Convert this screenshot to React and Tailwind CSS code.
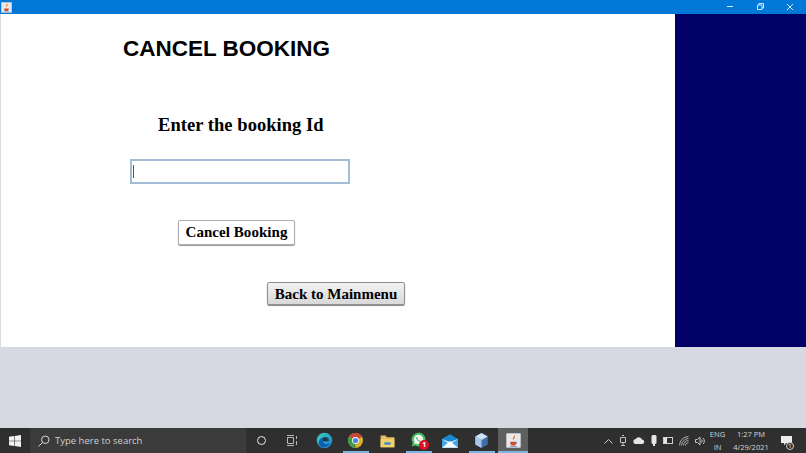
import React from "react";

const Under = ({ on, active, children }) => (
  <div className={active ? "relative flex h-full w-[30px] items-center justify-center bg-[#5f5f5f] mx-[0.75px]" : "relative flex h-full w-[30px] items-center justify-center mx-[0.75px]"}>
    {children}
    {on ? <div className={active ? "absolute bottom-0 left-0 right-0 h-[2px] bg-[#7cb6e0]" : "absolute bottom-0 left-[2px] right-[2px] h-[2px] bg-[#7cb6e0]"} /> : null}
  </div>
);

function Edge() {
  return (
    <svg width="17" height="17" viewBox="0 0 24 24">
      <defs>
        <linearGradient id="e1" x1="0" y1="0" x2="1" y2="1"><stop offset="0" stopColor="#3bd0c0" /><stop offset="1" stopColor="#1c7fd0" /></linearGradient>
      </defs>
      <circle cx="12" cy="12" r="11" fill="url(#e1)" />
      <path d="M4 16c0-6 5-9 9-8 3 .7 4 3 3 5h-6c0 4 5 5 10 3-2 5-8 7-12 5-3-1-4-3-4-5z" fill="#0b5fb0" />
      <path d="M10 13h8c1-3-1-6-5-6-2 0-3 1-4 2 1 0 1 3 1 4z" fill="#2a2a2a" opacity="0.75" />
    </svg>
  );
}
function Chrome() {
  return (
    <svg width="15" height="15" viewBox="0 0 24 24">
      <circle cx="12" cy="12" r="12" fill="#d8b030" />
      <path d="M12 12 1.6 6A12 12 0 0 1 22.4 6z" fill="#c9443a" />
      <path d="M12 12 1.6 6A12 12 0 0 0 12 24z" fill="#3f9a4c" />
      <circle cx="12" cy="12" r="5.5" fill="#fff" />
      <circle cx="12" cy="12" r="4.2" fill="#4a86dc" />
    </svg>
  );
}
function Folder() {
  return (
    <svg width="15" height="14" viewBox="0 0 24 22">
      <path d="M1 2h8l2 3h12v16H1z" fill="#e8c05c" />
      <path d="M1 8h22v13H1z" fill="#f2d06e" />
      <path d="M7 13h10v4H7z" fill="#3e8ac0" />
    </svg>
  );
}
function WhatsApp() {
  return (
    <div className="relative ml-[3px] h-[18px] w-[18px]">
      <svg width="15" height="15" viewBox="0 0 24 24" className="absolute left-0 top-0">
        <path d="M12 1a11 11 0 0 0-9.4 16.6L1 23l5.6-1.5A11 11 0 1 0 12 1z" fill="#43c05a" />
        <path d="M12 4.5a7.5 7.5 0 0 0-6.3 11.5l-.8 3 3.1-.8A7.5 7.5 0 1 0 12 4.500z" fill="#f3f3f3" />
        <path d="M9 8c-1 1-1 2.500.5 4.500S13 16 14.500 15.500l1-1.200-2-1.300-.8.7c-1-.5-1.800-1.400-2.200-2.400l.7-.7-1-2.200z" fill="#43c05a" />
      </svg>
      <div className="absolute bottom-0 right-0 flex h-[10px] w-[10px] items-center justify-center rounded-full bg-[#e01020] text-[7px] font-bold leading-none text-white">1</div>
    </div>
  );
}
function Mail() {
  return (
    <svg width="16" height="14" viewBox="0 0 24 20">
      <path d="M0 7 12 0l12 7v13H0z" fill="#1a8ad0" />
      <path d="M0 7l12 7 12-7v13H0z" fill="#3ea8e6" />
      <path d="M0 20 12 10l12 10z" fill="#ffffff" opacity="0.95" />
      <path d="M0 7l12 8 12-8-12 5z" fill="#fff" />
    </svg>
  );
}
function Box() {
  return (
    <svg width="13" height="15" viewBox="0 0 20 24">
      <path d="M10 0 20 5.500v13L10 24 0 18.500v-13z" fill="#3d6fb0" />
      <path d="M10 0 20 5.500 10 11 0 5.500z" fill="#cfe2f4" />
      <path d="M10 11v13L0 18.500v-13z" fill="#a9c8e8" />
    </svg>
  );
}
function Java({ size = 15 }) {
  return (
    <svg width={size} height={size} viewBox="0 0 24 24">
      <rect x="0.500" y="0.500" width="23" height="23" rx="2" fill="#e8e8e8" stroke="#bcbcbc" />
      <path d="M13 3c1 3-3 4-2 7 .3 1 1 1.500 1 1.500-1-2 3-3.500 2.500-6C14.300 4.500 14 3.500 13 3z" fill="#e07020" />
      <path d="M7 14h9v3c0 2-2 3-4.500 3S7 19 7 17z" fill="#d04a30" />
      <path d="M6 21h12v1H6z" fill="#4a70a8" />
      <path d="M16 14.500c2 0 2 2.500-.5 3" fill="none" stroke="#4a70a8" />
    </svg>
  );
}

export default function App() {
  return (
    <div className="flex h-[453px] w-[806px] flex-col overflow-hidden bg-[#d6d9e2]" style={{ fontFamily: '"Liberation Serif", serif' }}>
      <div className="flex h-[14px] shrink-0 items-center justify-between bg-[#0078d7]">
        <div className="ml-[1px] mt-[1px]"><Java size={11} /></div>
        <div className="flex items-center text-[#d5e6f6]">
          <svg width="30" height="14" viewBox="0 0 30 14"><path d="M12 6.500h6" stroke="currentColor" strokeWidth="1" /></svg>
          <svg width="30" height="14" viewBox="0 0 30 14"><path d="M12.500 5h4.500v4.500h-4.500zM14 5V3.500h4.500V8H17" fill="none" stroke="currentColor" strokeWidth="1" /></svg>
          <svg width="30" height="14" viewBox="0 0 30 14" className="mr-[1px]"><path d="M12 4l6 6M18 4l-6 6" stroke="currentColor" strokeWidth="1" /></svg>
        </div>
      </div>

      <div className="flex h-[333px] shrink-0">
        <div className="flex w-[675px] flex-col items-start border-l border-[#dcdcdc] bg-white">
          <h1 className="ml-[122px] mt-[20px] text-[22.5px] font-bold leading-[30px] text-black" style={{ fontFamily: '"Liberation Sans", sans-serif' }}>CANCEL BOOKING</h1>
          <p className="ml-[157px] mt-[49px] text-[18.5px] font-bold leading-[24px] tracking-[0.05px] text-black">Enter the booking Id</p>
          <div className="ml-[129px] mt-[22px] flex h-[25px] w-[220px] items-center border-2 border-[#a3bcd8] bg-white pl-[1px]">
            <div className="h-[13px] w-px bg-[#555]" />
          </div>
          <button className="ml-[177px] mt-[36px] h-[25px] w-[117px] rounded-[2px] border border-[#adadad] bg-white text-[15px] font-bold tracking-[0.05px] text-black shadow-[0_1px_1px_#999]">Cancel Booking</button>
          <button className="ml-[266px] mt-[37px] h-[23px] w-[138px] rounded-[2px] border border-[#8f8f8f] bg-gradient-to-b from-[#f2f2f2] to-[#d8d8d8] text-[15px] font-bold text-black shadow-[0_1px_1px_#888]">Back to Mainmenu</button>
        </div>
        <div className="flex-1 bg-[#000066]" />
      </div>

      <div className="flex-1" />

      <div className="flex h-[25px] shrink-0 items-center bg-[#2f2f2f] text-[#d8d8d8]" style={{ fontFamily: '"Open Sans", sans-serif' }}>
        <div className="flex h-full w-[30px] items-center justify-center">
          <svg width="12" height="12" viewBox="0 0 12 12" fill="#f2f2f2"><path d="M0 1.700 5 1v4.700H0zM5.600.900 12 0v5.700H5.600zM0 6.300h5V11l-5-.7zM5.600 6.300H12V12l-6.400-.9z" /></svg>
        </div>
        <div className="flex h-full w-[216px] items-center bg-[#3b3b3b] pl-[8px]">
          <svg width="12" height="12" viewBox="0 0 24 24" fill="none" stroke="#d8d8d8" strokeWidth="2"><circle cx="14.500" cy="9.500" r="7.500" /><path d="M9 15l-8 8" /></svg>
          <span className="ml-[5px] mt-[1px] text-[9.5px] text-[#d0d0d0]">Type here to search</span>
        </div>
        <div className="flex h-full w-[31px] items-center justify-center">
          <div className="h-[9px] w-[9px] rounded-full border-[1.500px] border-[#e8e8e8]" />
        </div>
        <div className="flex h-full w-[30px] items-center justify-center">
          <svg width="12" height="11" viewBox="0 0 12 11" fill="none" stroke="#b8b8b8"><path d="M1 .5h7M1 10.500h7M1.500 2.500h6v6h-6zM10.500 1v3M10.500 6v4" /></svg>
        </div>
        <div className="flex h-full items-center pl-[1.500px]">
          <Under><Edge /></Under>
          <Under on><Chrome /></Under>
          <Under><Folder /></Under>
          <Under on><WhatsApp /></Under>
          <Under><Mail /></Under>
          <Under on><Box /></Under>
          <Under on active><Java /></Under>
        </div>
        <div className="flex-1" />
        <div className="flex h-full items-center gap-[6px] text-[#c8c8c8]">
          <svg width="9" height="6" viewBox="0 0 9 6" fill="none" stroke="#c8c8c8"><path d="M.5 5.500l4-4 4 4" /></svg>
          <svg width="8" height="11" viewBox="0 0 8 11" fill="none" stroke="#c0c0c0"><path d="M1.500 2.500h5v5h-5zM3 .5h2M4 7.500v3M2 10.500h4" /></svg>
          <svg width="12" height="7" viewBox="0 0 12 7" fill="#e6e6e6"><path d="M3 7a2.500 2.500 0 0 1-.300-5A3.500 3.500 0 0 1 9 2.500 2.300 2.300 0 0 1 9.500 7z" /></svg>
          <svg width="6" height="12" viewBox="0 0 6 12" fill="#e6e6e6"><rect x="0.500" width="5" height="9" rx="1.500" /><path d="M2 9h2v2H2z" /></svg>
          <svg width="10" height="7" viewBox="0 0 10 7" fill="none" stroke="#d0d0d0"><rect x="0.500" y="0.500" width="9" height="6" /><rect x="1" y="1" width="3" height="5" fill="#e6e6e6" stroke="none" /></svg>
          <svg width="10" height="10" viewBox="0 0 10 10" fill="none" stroke="#a8a8a8"><path d="M.5 9.500a9 9 0 0 1 9-9M2.500 9.500a7 7 0 0 1 7-7M4.500 9.500a5 5 0 0 1 5-5M6.500 9.500a3 3 0 0 1 3-3" /></svg>
          <svg width="10" height="10" viewBox="0 0 10 10" fill="none" stroke="#c4c4c4"><path d="M.5 3.500h2l2.500-2.500v8L2.500 6.500h-2zM6.500 3.500a2 2 0 0 1 0 3M8 2a4 4 0 0 1 0 6" /></svg>
        </div>
        <div className="ml-[4px] flex w-[17px] flex-col items-center text-[7.5px] leading-[13px] text-[#d4d4d4]">
          <span>ENG</span>
          <span>IN</span>
        </div>
        <div className="ml-[6px] flex w-[38px] flex-col items-center text-[7.5px] leading-[13px] text-[#d4d4d4]">
          <span>1:27 PM</span>
          <span>4/29/2021</span>
        </div>
        <div className="relative ml-[8px] mr-[12px] flex h-full w-[16px] items-center justify-center">
          <svg width="11" height="10" viewBox="0 0 11 10" fill="#ececec"><path d="M0 0h11v7H5L3 9.500V7H0z" /></svg>
          <div className="absolute bottom-[3px] right-[0px] flex h-[8px] w-[8px] items-center justify-center rounded-full border border-[#cfcfcf] bg-[#2f2f2f] text-[6px] leading-none text-white">1</div>
        </div>
      </div>
    </div>
  );
}
